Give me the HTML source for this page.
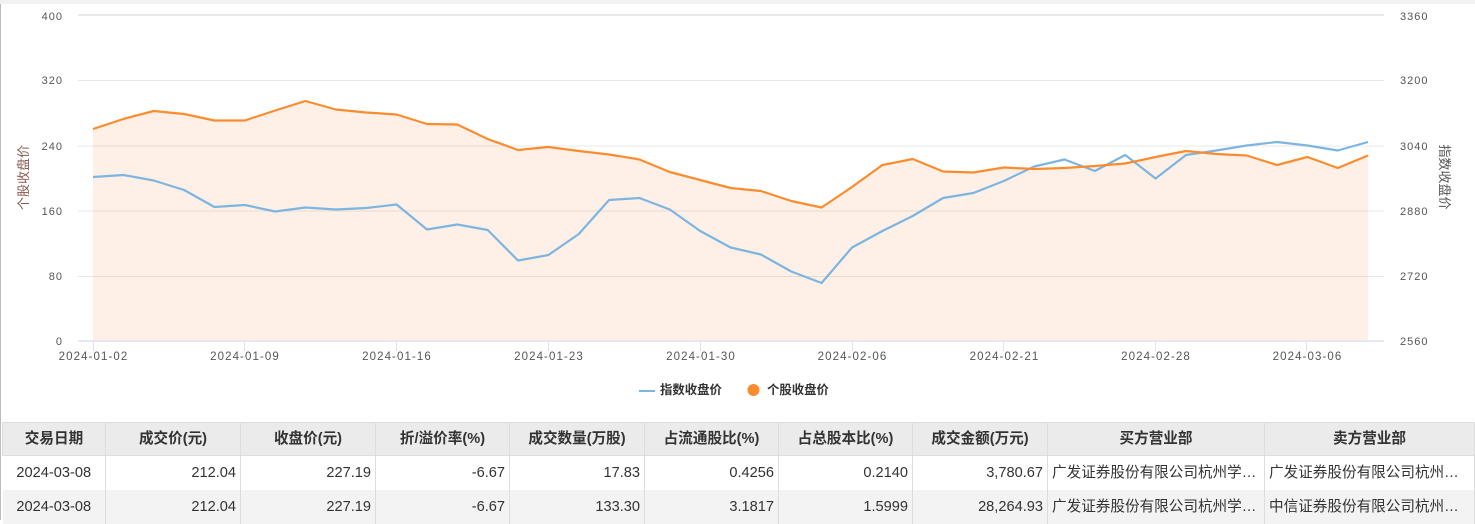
<!DOCTYPE html>
<html lang="zh">
<head>
<meta charset="utf-8">
<style>
html,body{margin:0;padding:0;background:#fff;}
body{width:1475px;height:520px;position:relative;overflow:hidden;font-family:"Liberation Sans","Noto Sans CJK SC",sans-serif;}
.top{position:absolute;left:0;top:0;width:1475px;height:4px;background:#f2f2f2;}
.left{position:absolute;left:0;top:4px;width:1px;height:516px;background:#bdbdbd;}
svg{position:absolute;left:0;top:0;}
svg text{font-family:"Liberation Sans","Noto Sans CJK SC",sans-serif;font-size:11px;fill:#555;letter-spacing:1px;}
svg .x text{font-size:11.5px;letter-spacing:1.1px;}
table{position:absolute;left:2px;top:422px;width:1473px;border-collapse:collapse;table-layout:fixed;font-size:14.6px;color:#333;}
th,td{box-sizing:border-box;white-space:nowrap;overflow:hidden;}
th{padding:0 4px;line-height:32px;height:33px;background:#ebebeb;font-weight:bold;text-align:center;color:#333;border:1px solid #ddd;}
td{padding:0 4px;line-height:34px;height:34px;text-align:right;border-right:1px solid #ddd;border-left:1px solid #ddd;}
td:first-child{border-left:none;}
td.c{text-align:center;}
td.l{text-align:left;text-overflow:ellipsis;}
td.e{padding-right:14px;}
tr.alt td{background:#f3f3f3;}
</style>
</head>
<body>
<div class="top"></div>
<div class="left"></div>
<svg width="1475" height="420" viewBox="0 0 1475 420">
<polygon fill="#fef0e6" points="93,341 93,129 123.4,119 153.7,111 184.1,114 214.4,120.5 244.8,120.5 275.2,110.5 305.5,101 335.9,109.5 366.2,112.5 396.6,114.5 427,124 457.3,124.5 487.7,139 518,150 548.4,147 578.8,151 609.1,154.5 639.5,159.5 669.8,172 700.2,180 730.6,188 760.9,191 791.3,201 821.6,207.5 852,187 882.4,165 912.7,159 943.1,171.5 973.4,172.5 1003.8,167.5 1034.2,169 1064.5,168 1094.9,166 1125.2,163.5 1155.6,157 1186,151 1216.3,154 1246.7,155.5 1277,165 1307.4,157 1337.8,168 1368,155.5 1368,341"/>
<g stroke="#000" stroke-opacity=".09" stroke-width="1">
<line x1="78" x2="1384" y1="15" y2="15" stroke-width="2"/>
<line x1="78" x2="1384" y1="80.5" y2="80.5"/>
<line x1="78" x2="1384" y1="146" y2="146"/>
<line x1="78" x2="1384" y1="211" y2="211"/>
<line x1="78" x2="1384" y1="276.5" y2="276.5"/>
</g>
<line x1="78" x2="1384" y1="341" y2="341" stroke="#dfe3f0" stroke-width="1.5"/>
<g stroke="#dfe3f0" stroke-width="1">
<line x1="93.5" x2="93.5" y1="341" y2="351"/>
<line x1="244.5" x2="244.5" y1="341" y2="351"/>
<line x1="396.5" x2="396.5" y1="341" y2="351"/>
<line x1="548.5" x2="548.5" y1="341" y2="351"/>
<line x1="700.5" x2="700.5" y1="341" y2="351"/>
<line x1="852.5" x2="852.5" y1="341" y2="351"/>
<line x1="1003.5" x2="1003.5" y1="341" y2="351"/>
<line x1="1155.5" x2="1155.5" y1="341" y2="351"/>
<line x1="1306.5" x2="1306.5" y1="341" y2="351"/>
</g>
<polyline fill="none" stroke="#7cb5e0" stroke-width="2.2" stroke-linejoin="round" points="93,177 123.4,175 153.7,180.5 184.1,190 214.4,207 244.8,205 275.2,211.5 305.5,207.5 335.9,209.5 366.2,208 396.6,204.5 427,229.5 457.3,224.5 487.7,230 518,260.5 548.4,255 578.8,234 609.1,200 639.5,198 669.8,209.5 700.2,231 730.6,247.5 760.9,254.5 791.3,271.5 821.6,283 852,247.5 882.4,231 912.7,216 943.1,198 973.4,193 1003.8,181 1034.2,166.5 1064.5,159.5 1094.9,171 1125.2,155 1155.6,178.5 1186,155 1216.3,150.5 1246.7,145.5 1277,142 1307.4,145.5 1337.8,150.5 1368,142"/>
<polyline fill="none" stroke="#fb8c2e" stroke-width="2.2" stroke-linejoin="round" points="93,129 123.4,119 153.7,111 184.1,114 214.4,120.5 244.8,120.5 275.2,110.5 305.5,101 335.9,109.5 366.2,112.5 396.6,114.5 427,124 457.3,124.5 487.7,139 518,150 548.4,147 578.8,151 609.1,154.5 639.5,159.5 669.8,172 700.2,180 730.6,188 760.9,191 791.3,201 821.6,207.5 852,187 882.4,165 912.7,159 943.1,171.5 973.4,172.5 1003.8,167.5 1034.2,169 1064.5,168 1094.9,166 1125.2,163.5 1155.6,157 1186,151 1216.3,154 1246.7,155.5 1277,165 1307.4,157 1337.8,168 1368,155.5"/>
<g text-anchor="end">
<text x="63" y="20">400</text>
<text x="63" y="84">320</text>
<text x="63" y="150">240</text>
<text x="63" y="215">160</text>
<text x="63" y="280">80</text>
<text x="63" y="345">0</text>
</g>
<g>
<text x="1400" y="20">3360</text>
<text x="1400" y="84">3200</text>
<text x="1400" y="150">3040</text>
<text x="1400" y="215">2880</text>
<text x="1400" y="280">2720</text>
<text x="1400" y="345">2560</text>
</g>
<g class="x" text-anchor="middle">
<text x="93.5" y="360">2024-01-02</text>
<text x="245" y="360">2024-01-09</text>
<text x="397" y="360">2024-01-16</text>
<text x="549" y="360">2024-01-23</text>
<text x="701" y="360">2024-01-30</text>
<text x="852.5" y="360">2024-02-06</text>
<text x="1004.5" y="360">2024-02-21</text>
<text x="1156" y="360">2024-02-28</text>
<text x="1307.5" y="360">2024-03-06</text>
</g>
<text transform="translate(28,177.5) rotate(-90)" text-anchor="middle" style="font-size:13px;letter-spacing:0;fill:#8a5a50">个股收盘价</text>
<text transform="translate(1440,177) rotate(90)" text-anchor="middle" style="font-size:13px;letter-spacing:0;fill:#555">指数收盘价</text>
<line x1="639" x2="655" y1="391" y2="391" stroke="#7cb5e0" stroke-width="2"/>
<text x="660" y="394" style="font-size:12.4px;letter-spacing:0;fill:#333;font-weight:bold">指数收盘价</text>
<circle cx="753.5" cy="390" r="6" fill="#fb8c2e"/>
<text x="767" y="394" style="font-size:12.4px;letter-spacing:0;fill:#333;font-weight:bold">个股收盘价</text>
</svg>
<table>
<colgroup>
<col style="width:103px"><col style="width:135px"><col style="width:135px"><col style="width:134px"><col style="width:135px"><col style="width:134px"><col style="width:134px"><col style="width:135px"><col style="width:217px"><col>
</colgroup>
<tr>
<th>交易日期</th><th>成交价(元)</th><th>收盘价(元)</th><th>折/溢价率(%)</th><th>成交数量(万股)</th><th>占流通股比(%)</th><th>占总股本比(%)</th><th>成交金额(万元)</th><th>买方营业部</th><th>卖方营业部</th>
</tr>
<tr>
<td class="c">2024-03-08</td><td>212.04</td><td>227.19</td><td>-6.67</td><td>17.83</td><td>0.4256</td><td>0.2140</td><td>3,780.67</td><td class="l">广发证券股份有限公司杭州学院路证券营业部</td><td class="l e">广发证券股份有限公司杭州学院路证券营业部</td>
</tr>
<tr class="alt">
<td class="c">2024-03-08</td><td>212.04</td><td>227.19</td><td>-6.67</td><td>133.30</td><td>3.1817</td><td>1.5999</td><td>28,264.93</td><td class="l">广发证券股份有限公司杭州学院路证券营业部</td><td class="l e">中信证券股份有限公司杭州学院路证券营业部</td>
</tr>
</table>
</body>
</html>
